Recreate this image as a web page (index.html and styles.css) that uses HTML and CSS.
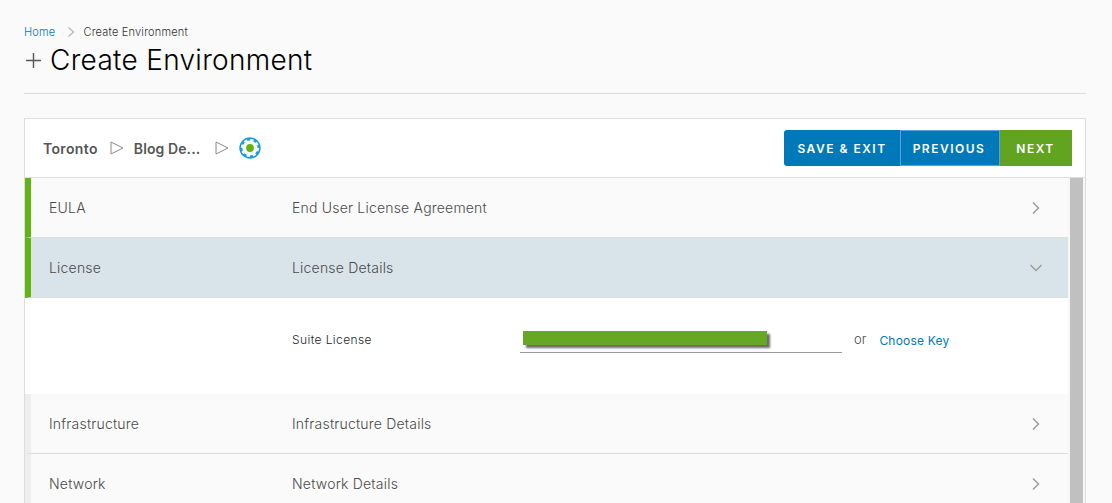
FILE: index.html
```html
<!DOCTYPE html>
<html lang="en">
<head>
<meta charset="utf-8">
<title>Create Environment</title>
<link rel="stylesheet" href="styles.css">
</head>
<body>
<main class="page">
  <nav class="crumbs">
    <a class="crumb-link">Home</a>
    <svg class="crumb-sep" width="8" height="10" viewBox="0 0 8 10"><path d="M1.5 .5 6.5 5 1.5 9.5" fill="none" stroke="#b5b5b5" stroke-width="1.2"/></svg>
    <span>Create Environment</span>
  </nav>
  <h1 class="title">
    <svg class="title-plus" width="15" height="15" viewBox="0 0 15 15"><path d="M7.5 0V15M0 7.5H15" stroke="#565656" stroke-width="1.4"/></svg>
    <span>Create Environment</span>
  </h1>
  <section class="card">
    <header class="card-head">
      <div class="trail">
        <span class="trail-item">Toronto</span>
        <svg class="trail-arrow" width="14" height="14" viewBox="0 0 14 14"><path d="M1 1 13 7 1 13Z" fill="none" stroke="#8a8a8a" stroke-width="1"/></svg>
        <span class="trail-item trail-wide">Blog De...</span>
        <svg class="trail-arrow" width="14" height="14" viewBox="0 0 14 14"><path d="M1 1 13 7 1 13Z" fill="none" stroke="#8a8a8a" stroke-width="1"/></svg>
        <svg class="trail-gear" width="22" height="22" viewBox="0 0 22 22">
          <circle cx="11" cy="11" r="10.7" fill="#1a9fdc"/>
          <circle cx="11" cy="11" r="7.6" fill="#fff"/>
          <circle cx="11" cy="11" r="8" fill="none" stroke="#fff" stroke-width="2" stroke-dasharray="3.3 2.98"/>
          <circle cx="11" cy="11" r="3.9" fill="#60b515"/>
        </svg>
      </div>
      <div class="actions">
        <button class="btn btn-first">SAVE &amp; EXIT</button>
        <button class="btn btn-focus">PREVIOUS</button>
        <button class="btn btn-next">NEXT</button>
      </div>
    </header>
    <div class="body">
      <div class="rows">
        <div class="row row-done">
          <span class="row-name">EULA</span>
          <span class="row-desc">End User License Agreement</span>
          <svg class="chev" width="10" height="14" viewBox="0 0 10 14"><path d="M2 1.5 7.5 7 2 12.5" fill="none" stroke="#9a9a9a" stroke-width="1.4"/></svg>
        </div>
        <div class="row row-done row-open">
          <span class="row-name">License</span>
          <span class="row-desc">License Details</span>
          <svg class="chev" width="14" height="10" viewBox="0 0 14 10"><path d="M1.5 2 7 7.5 12.5 2" fill="none" stroke="#9a9a9a" stroke-width="1.4"/></svg>
        </div>
        <div class="panel">
          <label class="panel-label">Suite License</label>
          <div class="field"><div class="redact"></div></div>
          <span class="or">or</span>
          <a class="panel-link">Choose Key</a>
        </div>
        <div class="row">
          <span class="row-name">Infrastructure</span>
          <span class="row-desc">Infrastructure Details</span>
          <svg class="chev" width="10" height="14" viewBox="0 0 10 14"><path d="M2 1.5 7.5 7 2 12.5" fill="none" stroke="#9a9a9a" stroke-width="1.4"/></svg>
        </div>
        <div class="row">
          <span class="row-name">Network</span>
          <span class="row-desc">Network Details</span>
          <svg class="chev" width="10" height="14" viewBox="0 0 10 14"><path d="M2 1.5 7.5 7 2 12.5" fill="none" stroke="#9a9a9a" stroke-width="1.4"/></svg>
        </div>
      </div>
      <div class="scroll"><div class="thumb"></div></div>
    </div>
  </section>
</main>
</body>
</html>
```
FILE: styles.css
```css
* { box-sizing: border-box; }
html, body { margin: 0; height: 503px; overflow: hidden; }
body { background: #fafafa; font-family: "Inter", "Liberation Sans", sans-serif; color: #565656; }
.page { padding: 24px 26px 0 24px; }
.crumbs { display: flex; align-items: center; height: 16px; font-size: 11px; font-weight: 300; letter-spacing: .2px; color: #313131; }
.crumb-link { color: #0079b8; }
.crumb-sep { margin: 0 8px 0 12px; }
.title { display: flex; align-items: center; gap: 9px; height: 54px; margin: 0; padding: 0 0 13px 2px; font-size: 28px; font-weight: 300; letter-spacing: .3px; color: #000; border-bottom: 1px solid #ddd; }
.title-plus { flex: none; }
.card { margin-top: 24px; width: 1062px; height: 385px; background: #fff; border: 1px solid #ddd; border-bottom: 0; }
.card-head { display: flex; justify-content: space-between; align-items: center; height: 59px; padding: 0 13px 0 18px; border-bottom: 1px solid #ddd; }
.trail { display: flex; align-items: center; }
.trail-item { font-size: 14px; font-weight: 600; letter-spacing: .35px; color: #565656; }
.trail-wide { width: 69px; letter-spacing: .1px; white-space: nowrap; }
.trail-arrow { margin-left: 12px; }
.trail-arrow + .trail-item { margin-left: 10px; }
.trail-gear { margin-left: 10px; }
.actions { display: flex; }
.btn { height: 36px; padding: 0; border: 0; color: #fff; background: #0079b8; font: 600 12px "Inter", "Liberation Sans", sans-serif; letter-spacing: 1.5px; }
.btn-first { width: 116px; border-radius: 3px 0 0 3px; }
.btn-focus { width: 100px; padding-right: 2px; border: 1px solid #5e9fe6; }
.btn-next { width: 72px; padding-right: 1px; background: #62a420; }
.body { display: flex; height: 340px; }
.rows { width: 1043px; }
.row { display: flex; align-items: center; height: 60px; padding-left: 18px; background: #fafafa; border-left: 6px solid #eee; border-bottom: 1px solid #ddd; font-size: 14px; font-weight: 300; letter-spacing: .2px; color: #4a4a4a; }
.row-done { border-left-color: #60b515; }
.row-open { background: #d9e4ea; }
.row-name { width: 243px; }
.row-desc { flex: 1; }
.chev { margin-right: 27px; }
.row-open .chev { margin-right: 25px; }
.panel { display: flex; align-items: flex-start; height: 96px; padding: 33px 0 0 267px; background: #fff; }
.panel-label { width: 228px; font-size: 12px; font-weight: 300; letter-spacing: .4px; color: #1f1f1f; line-height: 17px; }
.field { width: 322px; height: 23px; padding-left: 3px; border-bottom: 1px solid #9a9a9a; margin-top: -1px; }
.redact { width: 244px; height: 14px; margin-top: 1px; background: #66a826; box-shadow: 3px 3px 2px #6b6b6b; }
.or { margin-left: 12px; font-size: 13px; font-weight: 300; color: #4a4a4a; line-height: 17px; }
.panel-link { margin-left: 13px; font-size: 12px; letter-spacing: .2px; color: #0079b8; line-height: 19px; }
.scroll { flex: 1; padding: 0 2px; background: #f7f7f7; }
.thumb { width: 13px; height: 100%; background: #c0c0c0; }
```
